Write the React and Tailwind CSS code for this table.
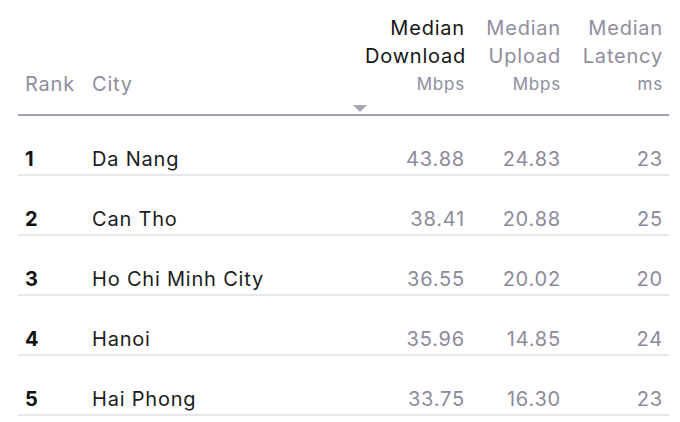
import React from "react";

const rows = [
  { rank: 1, city: "Da Nang", dl: "43.88", ul: "24.83", lat: "23" },
  { rank: 2, city: "Can Tho", dl: "38.41", ul: "20.88", lat: "25" },
  { rank: 3, city: "Ho Chi Minh City", dl: "36.55", ul: "20.02", lat: "20" },
  { rank: 4, city: "Hanoi", dl: "35.96", ul: "14.85", lat: "24" },
  { rank: 5, city: "Hai Phong", dl: "33.75", ul: "16.30", lat: "23" },
];

const grid = "grid grid-cols-[74px_273px_100px_96px_102px] pr-[6px]";

export default function App() {
  return (
    <div
      className="w-[680px] h-[422px] bg-white overflow-hidden pl-[18px] pr-[11px]"
      style={{ fontFamily: "Inter, 'Open Sans', sans-serif" }}
    >
      <div className="w-[651px] text-[20px] leading-[28px] tracking-[0.04em]">
        <div className={`${grid} h-[116px] items-end border-b-2 border-[#a3a2b3] pb-[16px] text-[#8f8d9e]`}>
          <div className="pl-[7px]">Rank</div>
          <div className="relative">
            City
            <div className="absolute right-[-2px] bottom-[-14px] w-0 h-0 border-l-[7px] border-r-[7px] border-t-[7px] border-l-transparent border-r-transparent border-t-[#a9a8b6]" />
          </div>
          <div className="text-right flex flex-col">
            <span className="text-[#161616]">Median</span>
            <span className="text-[#161616]">Download</span>
            <span className="text-[17px]">Mbps</span>
          </div>
          <div className="text-right flex flex-col">
            <span>Median</span>
            <span>Upload</span>
            <span className="text-[17px]">Mbps</span>
          </div>
          <div className="text-right flex flex-col">
            <span>Median</span>
            <span>Latency</span>
            <span className="text-[17px]">ms</span>
          </div>
        </div>
        {rows.map((r) => (
          <div
            key={r.rank}
            className={`${grid} h-[60px] items-end border-b-2 border-[#e7e6ec] pb-[1px]`}
          >
            <div className="pl-[7px] font-bold text-[#111]">{r.rank}</div>
            <div className="text-[#1c1c1c]">{r.city}</div>
            <div className="text-right text-[#8c8a9b]">{r.dl}</div>
            <div className="text-right text-[#8c8a9b]">{r.ul}</div>
            <div className="text-right text-[#8c8a9b]">{r.lat}</div>
          </div>
        ))}
      </div>
    </div>
  );
}
